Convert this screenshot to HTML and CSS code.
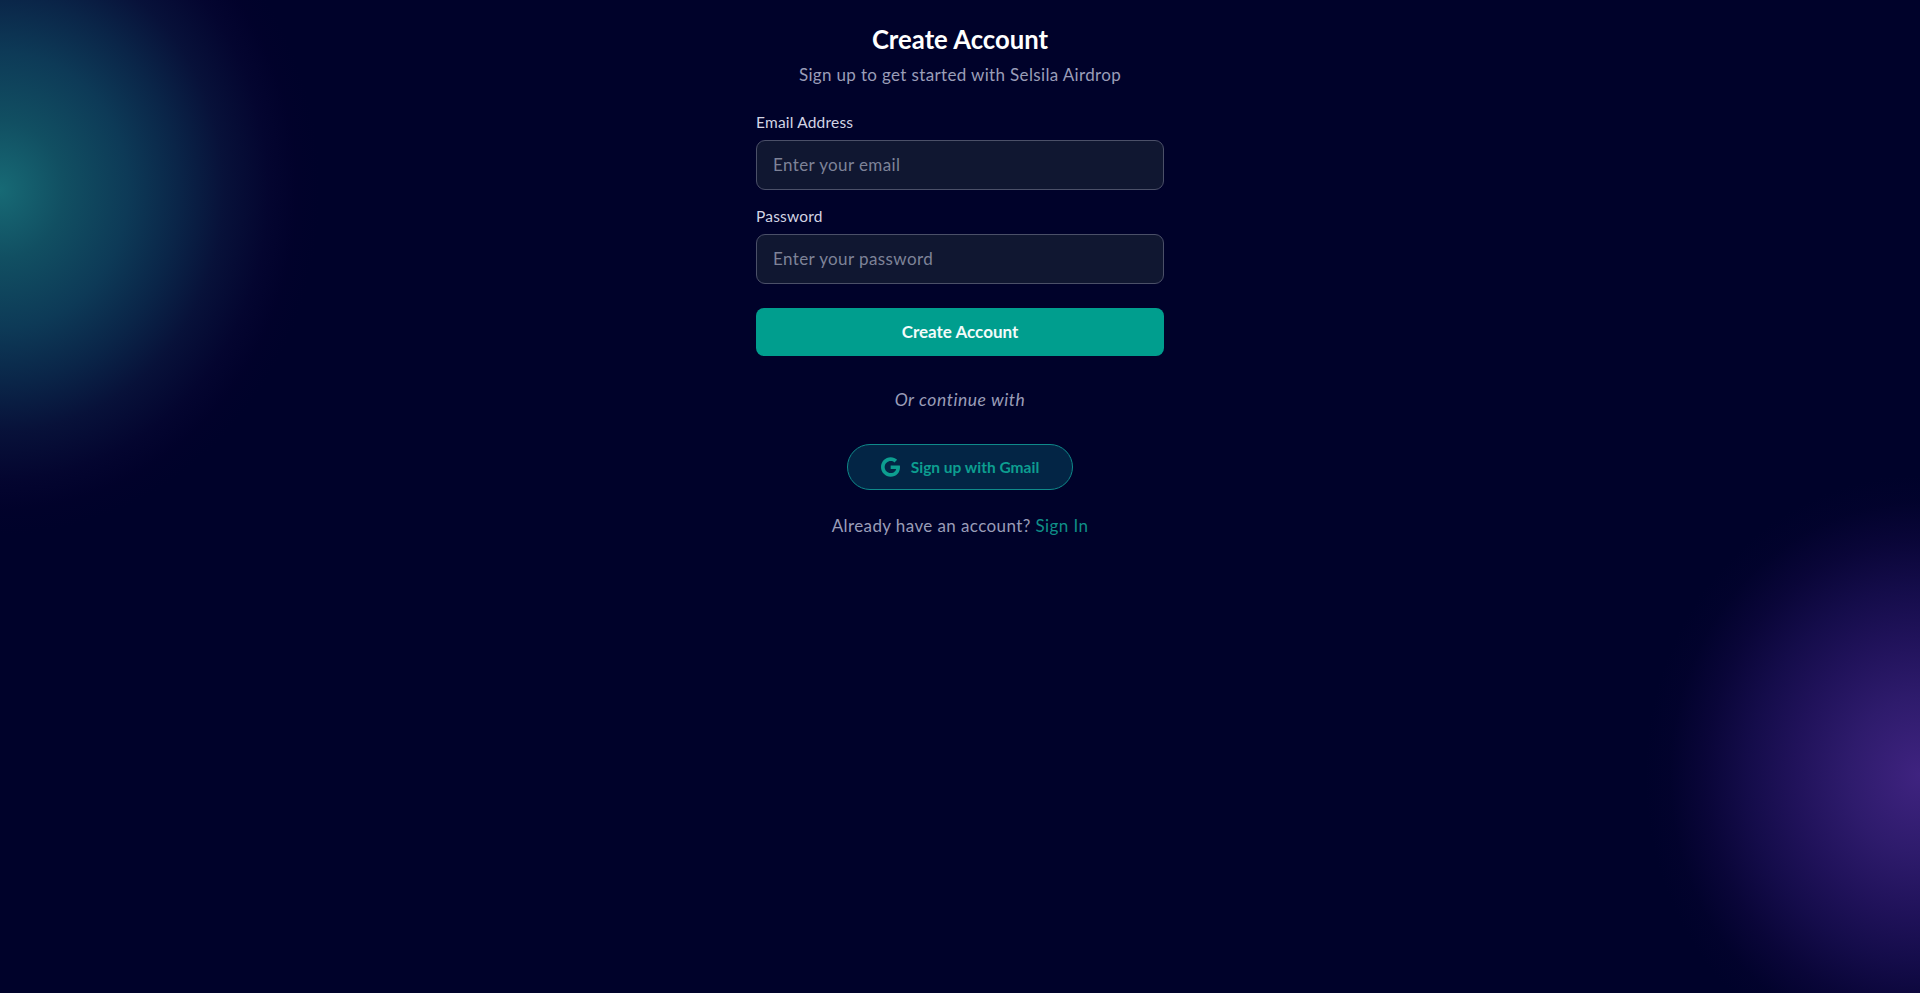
FILE: index.html
```html
<!DOCTYPE html>
<html lang="en">
<head>
<meta charset="utf-8">
<title>Create Account</title>
<link rel="stylesheet" href="styles.css">
</head>
<body>
<main class="page">
  <form class="card">
    <h1 class="title">Create Account</h1>
    <p class="subtitle">Sign up to get started with Selsila Airdrop</p>
    <label class="field field-email">
      <span class="label">Email Address</span>
      <input class="input" type="email" placeholder="Enter your email">
    </label>
    <label class="field field-password">
      <span class="label">Password</span>
      <input class="input" type="password" placeholder="Enter your password">
    </label>
    <button class="submit" type="button">Create Account</button>
    <p class="divider">Or continue with</p>
    <button class="gmail" type="button">
      <svg class="gmail-icon" viewBox="0 0 488 512" aria-hidden="true"><path d="M488 261.8C488 403.3 391.1 504 248 504 110.8 504 0 393.2 0 256S110.8 8 248 8c66.8 0 123 24.5 166.3 64.9l-67.5 64.9C258.5 52.6 94.3 116.6 94.3 256c0 86.5 69.1 156.6 153.7 156.6 98.2 0 135-70.4 140.8-106.9H248v-85.3h236.1c2.3 12.7 3.9 24.9 3.9 41.4z"/></svg>
      <span>Sign up with Gmail</span>
    </button>
    <p class="switch">Already have an account? <a class="switch-link" href="#">Sign In</a></p>
  </form>
</main>
</body>
</html>
```
FILE: styles.css
```css
* { box-sizing: border-box; }
html, body { height: 100%; margin: 0; }
body {
  background:
    radial-gradient(ellipse 320px 345px at 0 190px, #176a75 0%, #114f62 20%, #0d3a57 40%, #0a2548 56%, rgba(9,20,60,.85) 70%, rgba(7,8,52,.55) 84%, rgba(6,0,46,.2) 93%, rgba(4,0,42,0) 100%),
    radial-gradient(ellipse 275px 300px at 1920px 775px, #3f2380 0%, #2e1b6c 26%, #20125a 46%, rgba(24,14,80,.85) 62%, rgba(16,8,66,.6) 78%, rgba(8,4,52,.25) 91%, rgba(0,0,42,0) 100%),
    #00022a;
  font-family: "Lato", "Noto Sans", sans-serif;
  overflow: hidden;
}
.page { display: flex; justify-content: center; }
.card { width: 408px; display: flex; flex-direction: column; padding-top: 21px; }
.title { margin: 0; height: 36px; line-height: 36px; font-size: 25.7px; font-weight: 700; color: #fff; text-align: center; }
.subtitle { margin: 5px 0 0; height: 26px; line-height: 26px; font-size: 17px; letter-spacing: .35px; color: #9a9db8; text-align: center; }
.field { display: flex; flex-direction: column; }
.field-email { margin-top: 24px; }
.field-password { margin-top: 16px; }
.label { height: 20px; line-height: 20px; margin-bottom: 8px; font-size: 15.5px; letter-spacing: .2px; color: #d3d5e4; }
.input { height: 50px; padding: 0 16px 2px; border: 1px solid #4b5068; border-radius: 9px; background: #101731; outline: none; font: inherit; font-size: 17px; letter-spacing: .4px; color: #fff; }
.input::placeholder { color: #7e8398; opacity: 1; }
.submit { margin-top: 24px; height: 48px; padding: 0 0 2px; border: 0; border-radius: 8px; background: #009e8e; color: #f2fbfa; font: inherit; font-size: 17px; font-weight: 700; }
.divider { margin: 33px 0 0; height: 22px; line-height: 22px; font-size: 17.5px; font-style: italic; letter-spacing: .55px; color: #9a9db8; text-align: center; }
.gmail { align-self: center; margin-top: 33px; width: 226px; height: 46px; display: flex; align-items: center; justify-content: center; gap: 11px; border: 1px solid #0f8a8a; border-radius: 23px; background: #032545; color: #0d9e90; font: inherit; font-size: 15.5px; font-weight: 700; }
.gmail-icon { width: 19px; height: 20px; fill: #0d9e90; }
.switch { margin: 23px 0 0; height: 26px; line-height: 26px; font-size: 17px; letter-spacing: .4px; color: #9a9db8; text-align: center; }
.switch-link { color: #0f8f88; text-decoration: none; }
```
